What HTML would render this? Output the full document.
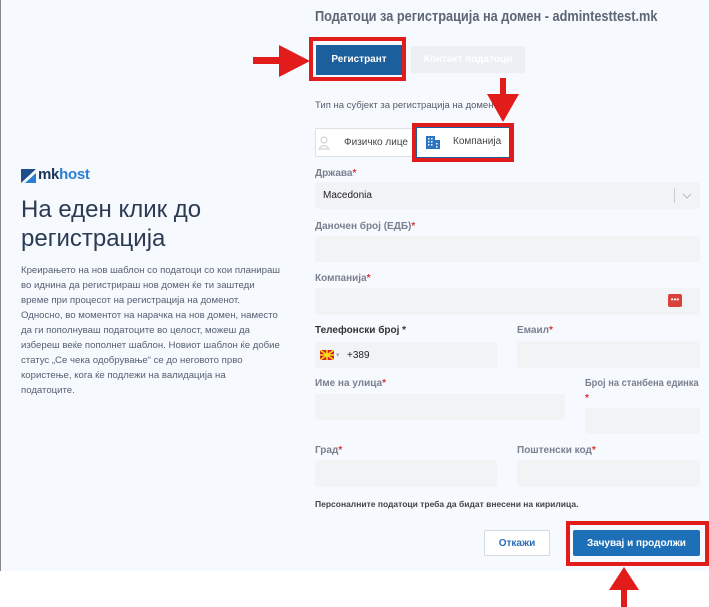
<!DOCTYPE html>
<html><head><meta charset="utf-8"><style>
*{margin:0;padding:0;box-sizing:border-box}
body{width:709px;height:607px;background:#fff;font-family:"Liberation Sans",sans-serif;position:relative;overflow:hidden}
.bg{position:absolute;left:0;top:0;width:709px;height:571px;background:#f6f9fd;border-left:1px solid #888}
.a{position:absolute;white-space:nowrap}
.lbl{position:absolute;font-size:10px;font-weight:bold;color:#7a8090;white-space:nowrap}
.lbl b{color:#d33;font-weight:bold}
.in{position:absolute;background:#f2f3f5;border-radius:3px}
.red{position:absolute;border:4px solid #e21b1b}
</style></head><body>
<div class="bg"></div>
<div class="a" style="left:315px;top:8px;font-size:15px;font-weight:bold;color:#5d6675;transform:scaleX(.85);transform-origin:left">Податоци за регистрација на домен - admintesttest.mk</div>

<div class="red" style="left:309px;top:37px;width:97px;height:44px"></div>
<div class="a" style="left:316px;top:45px;width:86px;height:30px;background:#1b5f9c;color:#fff;font-size:10px;font-weight:bold;text-align:center;line-height:30px">Регистрант</div>
<div class="a" style="left:411px;top:46px;width:114px;height:27px;background:#eceff3;color:#fff;font-size:10px;font-weight:bold;text-align:center;line-height:27px">Контакт податоци</div>

<svg class="a" style="left:250px;top:44px" width="62" height="34"><rect x="3" y="13" width="28" height="7" fill="#e21b1b"/><polygon points="29,1 60,17 29,33" fill="#e21b1b"/></svg>
<svg class="a" style="left:486px;top:76px" width="34" height="48"><rect x="14" y="2" width="6" height="22" fill="#e21b1b"/><polygon points="1,18 33,18 17,46" fill="#e21b1b"/></svg>

<div class="a" style="left:315px;top:100px;font-size:9.5px;color:#555d6b">Тип на субјект за регистрација на домен</div>
<div class="a" style="left:315px;top:128px;width:100px;height:29px;border:1px solid #dde0e5;background:#fff;border-radius:2px"></div>
<svg class="a" style="left:318px;top:135px" width="12" height="15"><circle cx="6" cy="5" r="3" fill="none" stroke="#ccc"/><path d="M1 14 Q6 7 11 14Z" fill="none" stroke="#ccc"/></svg>
<div class="a" style="left:344px;top:137px;font-size:10px;color:#444">Физичко лице</div>
<div class="red" style="left:412px;top:123px;width:102px;height:39px"></div>
<div class="a" style="left:416px;top:127px;width:94px;height:31px;border:1px solid #1b5f9c;background:#fff"></div>
<svg class="a" style="left:426px;top:136px" width="14" height="13"><rect x="0" y="0" width="9" height="13" fill="#2a74c0"/><rect x="7" y="4" width="7" height="9" fill="#2a74c0"/><g fill="#fff"><rect x="2" y="2" width="1.5" height="1.5"/><rect x="5" y="2" width="1.5" height="1.5"/><rect x="2" y="5" width="1.5" height="1.5"/><rect x="5" y="5" width="1.5" height="1.5"/><rect x="2" y="8" width="1.5" height="1.5"/><rect x="5" y="8" width="1.5" height="1.5"/><rect x="10" y="7" width="1.5" height="1.5"/><rect x="10" y="10" width="1.5" height="1.5"/></g></svg>
<div class="a" style="left:453px;top:136px;font-size:10px;color:#444">Компанија</div>

<div class="lbl" style="left:315px;top:168px">Држава<b>*</b></div>
<div class="in" style="left:315px;top:182px;width:385px;height:27px"></div>
<div class="a" style="left:323px;top:190px;font-size:10px;color:#222">Macedonia</div>
<div class="a" style="left:674px;top:188px;width:1px;height:15px;background:#ccc"></div>
<svg class="a" style="left:682px;top:193px" width="10" height="6"><path d="M1 1L5 5L9 1" fill="none" stroke="#bbb"/></svg>

<div class="lbl" style="left:315px;top:221px">Даночен број (ЕДБ)<b>*</b></div>
<div class="in" style="left:315px;top:236px;width:385px;height:26px"></div>
<div class="lbl" style="left:315px;top:273px">Компанија<b>*</b></div>
<div class="in" style="left:315px;top:288px;width:385px;height:27px"></div>
<div class="a" style="left:668px;top:294px;width:14px;height:13px;background:#d9413a;border-radius:2px;color:#fff;font-size:8px;line-height:11px;text-align:center">•••</div>

<div class="lbl" style="left:315px;top:325px;color:#333">Телефонски број *</div>
<div class="in" style="left:315px;top:342px;width:182px;height:26px"></div>
<div class="a" style="left:320px;top:350px;width:14px;height:10px;background:#d82126"></div>
<svg class="a" style="left:320px;top:350px" width="14" height="10"><g stroke="#f8e01a" stroke-width="1.5"><path d="M0 0L14 10M14 0L0 10M7 0V10M0 5H14"/></g><circle cx="7" cy="5" r="2" fill="#f8e01a"/></svg>
<div class="a" style="left:336px;top:351px;font-size:7px;color:#aaa">▾</div>
<div class="a" style="left:347px;top:350px;font-size:10px;color:#222">+389</div>
<div class="lbl" style="left:517px;top:325px">Емаил<b>*</b></div>
<div class="in" style="left:517px;top:341px;width:183px;height:27px"></div>

<div class="lbl" style="left:315px;top:378px">Име на улица<b>*</b></div>
<div class="in" style="left:315px;top:394px;width:250px;height:26px"></div>
<div class="lbl" style="left:585px;top:378px;transform:scaleX(.93);transform-origin:left">Број на станбена единка</div>
<div class="lbl" style="left:585px;top:393px"><b>*</b></div>
<div class="in" style="left:585px;top:408px;width:115px;height:26px"></div>

<div class="lbl" style="left:315px;top:445px">Град<b>*</b></div>
<div class="in" style="left:315px;top:460px;width:182px;height:27px"></div>
<div class="lbl" style="left:517px;top:445px">Поштенски код<b>*</b></div>
<div class="in" style="left:517px;top:460px;width:183px;height:27px"></div>

<div class="a" style="left:315px;top:499px;font-size:8.5px;font-weight:bold;color:#444">Персоналните податоци треба да бидат внесени на кирилица.</div>

<div class="a" style="left:484px;top:530px;width:66px;height:26px;border:1px solid #d5d8dd;background:#fff;border-radius:2px;color:#2a6db5;font-size:10px;font-weight:bold;text-align:center;line-height:26px">Откажи</div>
<div class="red" style="left:566px;top:521px;width:143px;height:45px"></div>
<div class="a" style="left:573px;top:530px;width:127px;height:26px;background:#1d70b8;border-radius:2px;color:#fff;font-size:10px;font-weight:bold;text-align:center;line-height:28px">Зачувај и продолжи</div>
<svg class="a" style="left:608px;top:566px" width="32" height="41"><polygon points="16,1 31,24 1,24" fill="#e21b1b"/><rect x="13" y="22" width="6" height="19" fill="#e21b1b"/></svg>

<svg class="a" style="left:21px;top:169px" width="15" height="14"><polygon points="0,0 15,0 0,14" fill="#1d4e8a"/><polygon points="15,4 15,14 4,14" fill="#2a7fd0"/></svg>
<div class="a" style="left:38px;top:166px;font-size:15px;font-weight:bold;color:#1e3556;letter-spacing:-.3px">mk<span style="color:#2a7fd0">host</span></div>
<div class="a" style="left:21px;top:195px;font-size:24px;color:#2c3b54;line-height:29px">На еден клик до<br>регистрација</div>
<div class="a" style="left:21px;top:263px;font-size:9.6px;color:#566074;line-height:15px">Креирањето на нов шаблон со податоци со кои планираш<br>во иднина да регистрираш нов домен ќе ти заштеди<br>време при процесот на регистрација на доменот.<br>Односно, во моментот на нарачка на нов домен, наместо<br>да ги пополнуваш податоците во целост, можеш да<br>избереш веќе пополнет шаблон. Новиот шаблон ќе добие<br>статус „Се чека одобрување“ се до неговото прво<br>користење, кога ќе подлежи на валидација на<br>податоците.</div>
</body></html>
